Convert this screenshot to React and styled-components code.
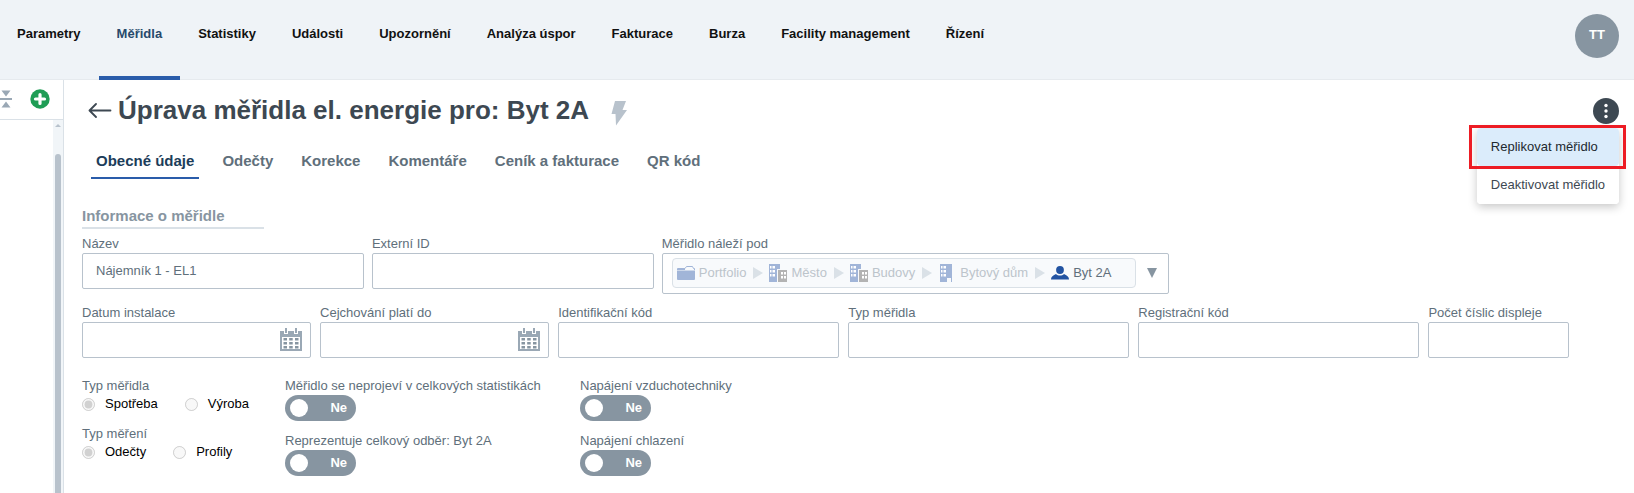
import React, { useState } from 'react';
import styled, { createGlobalStyle } from 'styled-components';

const GlobalStyle = createGlobalStyle`
	* {
		box-sizing: border-box;
	}

	body {
		margin: 0;
		background-color: #fff;
		color: #5f6f7e;
		font-family: 'Liberation Sans', Arial, sans-serif;
		font-size: 13px;
		line-height: 16px;
	}

	button,
	input {
		font: inherit;
	}
`;

const Page = styled.div`
	display: flex;
	flex-direction: column;
	min-height: 100vh;
`;

const Header = styled.header`
	display: flex;
	justify-content: space-between;
	height: 80px;
	padding-right: 15px;
	background-color: #eff3f7;
	border-bottom: 1px solid #e6eaee;
`;

const MainNav = styled.nav`
	display: flex;
	margin-bottom: -1px;
`;

const MainNavLink = styled.a`
	padding: 26px 18px 0;
	border-bottom: 4px solid ${({ $active }) => ($active ? '#2a5caa' : 'transparent')};
	color: ${({ $active }) => ($active ? '#27496b' : '#111')};
	font-weight: bold;
	text-decoration: none;
	white-space: nowrap;

	&:first-child {
		padding-left: 17px;
	}
`;

const Avatar = styled.button`
	width: 44px;
	height: 44px;
	margin-top: 14px;
	padding: 0 0 3px;
	border: 0;
	border-radius: 50%;
	background-color: #8795a1;
	color: #fff;
	font-weight: bold;
`;

const Body = styled.div`
	display: flex;
	flex: 1;
`;

const Sidebar = styled.aside`
	display: flex;
	flex-direction: column;
	flex: none;
	width: 64px;
	border-right: 1px solid #dae1e7;
`;

const SidebarTools = styled.div`
	display: flex;
	align-items: center;
	justify-content: space-between;
	height: 40px;
	padding: 0 13px 2px 0;
	border-bottom: 1px solid #dae1e7;
`;

const IconButton = styled.button`
	display: flex;
	padding: 0;
	border: 0;
	background: none;
`;

const ScrollTrack = styled.div`
	display: flex;
	flex-direction: column;
	align-items: center;
	flex: 1;
	align-self: flex-end;
	width: 10px;
	padding-top: 4px;
	background-color: #f1f5f8;
`;

const ScrollThumb = styled.div`
	flex: 1;
	width: 6px;
	margin-top: 27px;
	border-radius: 3px 3px 0 0;
	background-color: #b8c2cc;
`;

const Content = styled.main`
	flex: 1;
	min-width: 0;
	padding: 14px 15px 16px 18px;
`;

const TitleRow = styled.div`
	display: flex;
	align-items: center;
	height: 34px;
	padding-left: 6px;
`;

const Title = styled.h1`
	margin: 0 22px 2px 6px;
	color: #3d4852;
	font-size: 26px;
	line-height: 32px;
	white-space: nowrap;
`;

const Bolt = styled.svg`
	flex: none;
	margin-top: 4px;
`;

const MenuAnchor = styled.div`
	position: relative;
	margin-left: auto;
`;

const MoreButton = styled(IconButton)`
	align-items: center;
	justify-content: center;
	width: 26px;
	height: 26px;
	border-radius: 50%;
	background-color: #3d4852;
`;

const Menu = styled.div`
	position: absolute;
	top: 30px;
	right: 0;
	border-radius: 4px;
	background-color: #fff;
	box-shadow: 0 3px 10px rgba(0, 0, 0, 0.22);
`;

const MenuItem = styled.button`
	display: block;
	width: 100%;
	height: 38px;
	padding: 0 14px;
	border: 0;
	border-radius: 4px;
	background-color: ${({ $active }) => ($active ? '#dbecfb' : '#fff')};
	color: ${({ $active }) => ($active ? '#22292f' : '#3d4852')};
	text-align: left;
	white-space: nowrap;
`;

const MenuHighlight = styled.div`
	position: absolute;
	top: -3px;
	left: -8px;
	right: -7px;
	height: 44px;
	border: 3px solid #ed1c24;
	pointer-events: none;
`;

const Tabs = styled.nav`
	display: flex;
	gap: 18px;
	margin-top: 22px;
	padding-left: 9px;
`;

const Tab = styled.a`
	padding: 2px 5px 7px;
	border-bottom: 2px solid ${({ $active }) => ($active ? '#2a5caa' : 'transparent')};
	color: ${({ $active }) => ($active ? '#1c3d5a' : '#606f7b')};
	font-size: 15px;
	font-weight: bold;
	line-height: 18px;
	text-decoration: none;
	white-space: nowrap;
`;

const SectionTitle = styled.h2`
	width: 182px;
	margin: 28px 0 7px;
	padding-bottom: 2px;
	border-bottom: 2px solid #dae1e7;
	color: #8795a1;
	font-size: 15px;
	line-height: 18px;
`;

const FieldRow = styled.div`
	display: grid;
	grid-template-columns: ${({ $columns }) => $columns};
	column-gap: ${({ $gap }) => $gap};
	margin: 0 50px 11px 0;
	align-items: start;
`;

const Field = styled.div`
	min-width: 0;
`;

const Label = styled.label`
	display: block;
	height: 17px;
	color: #606f7b;
	white-space: nowrap;
`;

const InputBox = styled.div`
	display: flex;
	align-items: center;
	height: 36px;
	border: 1px solid #b8c2cc;
	border-radius: 2px;
	padding-right: 7px;
`;

const TextInput = styled.input`
	flex: 1;
	min-width: 0;
	height: 32px;
	padding: 0 0 2px 13px;
	border: 0;
	outline: 0;
	background: none;
	color: #606f7b;
`;

const TreeSelect = styled.button`
	display: flex;
	align-items: center;
	width: 100%;
	height: 41px;
	padding: 0 11px 1px 9px;
	border: 1px solid #b8c2cc;
	border-radius: 2px;
	background-color: #fff;
`;

const Path = styled.span`
	display: flex;
	align-items: center;
	flex: 1;
	height: 30px;
	margin-right: 11px;
	padding-left: 4px;
	border: 1px solid #dae1e7;
	border-radius: 4px;
	background-color: #f8fafc;
`;

const PathItem = styled.span`
	display: flex;
	align-items: center;
	gap: 4px;
	color: ${({ $current }) => ($current ? '#606f7b' : '#bcc4cb')};
	white-space: nowrap;
`;

const PathArrow = styled.svg`
	flex: none;
	margin: 0 6px 0 7px;
`;

const Options = styled.div`
	display: flex;
	padding-top: 9px;
`;

const OptionColumn = styled.div`
	width: ${({ $width }) => $width};
`;

const RadioGroup = styled.fieldset`
	min-width: 0;
	height: 48px;
	margin: 0;
	padding: 0;
	border: 0;
`;

const Legend = styled.legend`
	padding: 0;
	color: #606f7b;
`;

const RadioRow = styled.div`
	display: flex;
	gap: 27px;
	padding-top: 2px;
`;

const RadioLabel = styled.label`
	display: flex;
	align-items: center;
	gap: 10px;
	color: #000;
`;

const Radio = styled.input`
	width: 13px;
	height: 13px;
	margin: 0;
`;

const SwitchField = styled.div`
	height: 55px;
`;

const Switch = styled.input`
	appearance: none;
	display: flex;
	align-items: center;
	justify-content: space-between;
	width: 71px;
	height: 26px;
	margin: 0;
	padding: 0 9px 0 5px;
	border-radius: 13px;
	background-color: #8795a1;
	color: #fff;
	font-weight: bold;

	&::before {
		content: '';
		width: 18px;
		height: 18px;
		border-radius: 50%;
		background-color: #fff;
	}

	&::after {
		content: 'Ne';
	}

	&:checked {
		flex-direction: row-reverse;
		padding: 0 5px 0 9px;
		background-color: #2a5caa;
	}

	&:checked::after {
		content: 'Ano';
	}
`;

const CollapseIcon = () => (
	<svg width='12' height='18' viewBox='0 0 12 18' fill='#9aa8b5'>
		<path d='M1.500 0.500h9L6 6.500zM0 8h12v2H0zM6 11.500l4.500 6h-9z' />
	</svg>
);

const AddIcon = () => (
	<svg width='20' height='20' viewBox='0 0 20 20'>
		<circle cx='10' cy='10' r='9.7' fill='#1f9d55' />
		<path d='M10 5.500v9M5.500 10h9' stroke='#fff' strokeWidth='3.200' strokeLinecap='round' />
	</svg>
);

const BackIcon = () => (
	<svg width='24' height='16' viewBox='0 0 24 16' fill='none' stroke='#3d4852' strokeWidth='1.800'>
		<path d='M22.500 7.500H2M8 1L1.500 7.500L8 14' strokeLinecap='round' strokeLinejoin='round' />
	</svg>
);

const BoltIcon = () => (
	<Bolt width='16' height='26' viewBox='0 0 16 26' fill='#b8c2cc'>
		<path d='M4 1h11l-3.500 9H16L5 25.500L4.500 14H0.500z' />
	</Bolt>
);

const DotsIcon = () => (
	<svg width='4' height='16' viewBox='0 0 4 16' fill='#fff'>
		<circle cx='2' cy='2.500' r='1.700' />
		<circle cx='2' cy='8' r='1.700' />
		<circle cx='2' cy='13.500' r='1.700' />
	</svg>
);

const CalendarIcon = () => (
	<svg width='24' height='24' viewBox='0 0 24 24'>
		<path d='M1 3h22v20H1z' fill='#9aa8b5' />
		<path d='M3 9h18v12H3z' fill='#fff' />
		<path d='M5 0h4v6H5zM15 0h4v6h-4z' fill='#fff' />
		<path d='M6 0h2v5H6zM16 0h2v5h-2z' fill='#9aa8b5' />
		<path
			d='M4.500 10h3.500v2.500H4.500zM10.200 10h3.500v2.500h-3.500zM16 10h3.500v2.500H16zM4.500 14h3.500v2.500H4.500zM10.200 14h3.500v2.500h-3.500zM16 14h3.500v2.500H16zM4.500 18h3.500v2.500H4.500zM10.200 18h3.500v2.500h-3.500zM16 18h3.500v2.500H16z'
			fill='#8795a1'
		/>
	</svg>
);

const FolderIcon = () => (
	<svg width='18' height='16' viewBox='0 0 18 16'>
		<path d='M0 5.500h18V14a1 1 0 0 1-1 1H1a1 1 0 0 1-1-1z' fill='#a1b5d8' />
		<path d='M0.500 5V3.500h7.500l1.500-2h6l1 2h1V5' fill='none' stroke='#a1b5d8' />
		<path d='M1 4h7v1H1z' fill='#a1b5d8' />
	</svg>
);

const BuildingsIcon = () => (
	<svg width='18' height='18' viewBox='0 0 18 18'>
		<path d='M0 0h11v18H0z' fill='#a1b5d8' />
		<path d='M1 2h1.500v2.500H1zM3.500 2H6v2.500H3.500zM1 6h1.500v2.500H1zM3.500 6H6v2.500H3.500zM1 10h1.500v2.500H1zM3.500 10H6v2.500H3.500z' fill='#fff' />
		<path d='M8 5h10v13H8z' fill='#f8fafc' />
		<path d='M9 6h9v12H9z' fill='#b3b3b3' />
		<path d='M12 8h2v2.500h-2zM15 8h2v2.500h-2zM12 12h2v2.500h-2zM15 12h2v2.500h-2z' fill='#fff' />
	</svg>
);

const BuildingIcon = () => (
	<svg width='18' height='18' viewBox='0 0 18 18'>
		<path d='M2 0h12v18h-1v-4H9v4H2z' fill='#a1b5d8' />
		<path d='M3 2h1.500v2.500H3zM5.500 2H8v2.500H5.500zM3 6h1.500v2.500H3zM5.500 6H8v2.500H5.500zM3 10h1.500v2.500H3zM5.500 10H8v2.500H5.500z' fill='#fff' />
	</svg>
);

const PersonIcon = () => (
	<svg width='18' height='14' viewBox='0 0 18 14' fill='#2253a2'>
		<circle cx='9' cy='4' r='3.900' />
		<path d='M0 13.500c0-2.500 1.500-3.800 5-5.500 2 2 6 2 8 0 3.500 1.700 5 3 5 5.500z' />
	</svg>
);

const Arrow = () => (
	<PathArrow width='10' height='12' viewBox='0 0 10 12' fill='#dae1e7'>
		<path d='M0 0l10 6-10 6z' />
	</PathArrow>
);

const navItems = [
	'Parametry',
	'Měřidla',
	'Statistiky',
	'Události',
	'Upozornění',
	'Analýza úspor',
	'Fakturace',
	'Burza',
	'Facility management',
	'Řízení',
];

const tabs = ['Obecné údaje', 'Odečty', 'Korekce', 'Komentáře', 'Ceník a fakturace', 'QR kód'];

const path = [
	{ name: 'Portfolio', Icon: FolderIcon },
	{ name: 'Město', Icon: BuildingsIcon },
	{ name: 'Budovy', Icon: BuildingsIcon },
	{ name: 'Bytový dům', Icon: BuildingIcon },
	{ name: 'Byt 2A', Icon: PersonIcon },
];

const TextField = ({ id, label, value = '', date }) => {
	const [text, setText] = useState(value);

	return (
		<Field>
			<Label htmlFor={id}>{label}</Label>
			<InputBox>
				<TextInput id={id} type='text' value={text} onChange={(e) => setText(e.target.value)} />
				{date && (
					<IconButton type='button' aria-label='Vybrat datum'>
						<CalendarIcon />
					</IconButton>
				)}
			</InputBox>
		</Field>
	);
};

const RadioField = ({ name, legend, options }) => (
	<RadioGroup>
		<Legend>{legend}</Legend>
		<RadioRow>
			{options.map((option, i) => (
				<RadioLabel key={option}>
					<Radio type='radio' name={name} defaultChecked={i === 0} disabled />
					{option}
				</RadioLabel>
			))}
		</RadioRow>
	</RadioGroup>
);

const Toggle = ({ id, label }) => (
	<SwitchField>
		<Label htmlFor={id}>{label}</Label>
		<Switch id={id} type='checkbox' role='switch' />
	</SwitchField>
);

const App = () => {
	const [menuOpen, setMenuOpen] = useState(true);

	return (
		<Page>
			<GlobalStyle />
			<Header>
				<MainNav>
					{navItems.map((item) => (
						<MainNavLink key={item} href='#' $active={item === 'Měřidla'}>
							{item}
						</MainNavLink>
					))}
				</MainNav>
				<Avatar type='button'>TT</Avatar>
			</Header>
			<Body>
				<Sidebar>
					<SidebarTools>
						<IconButton type='button' aria-label='Sbalit'>
							<CollapseIcon />
						</IconButton>
						<IconButton type='button' aria-label='Přidat'>
							<AddIcon />
						</IconButton>
					</SidebarTools>
					<ScrollTrack>
						<svg width='6' height='3' viewBox='0 0 6 3' fill='#b8c2cc'>
							<path d='M3 0l3 3H0z' />
						</svg>
						<ScrollThumb />
					</ScrollTrack>
				</Sidebar>
				<Content>
					<TitleRow>
						<IconButton type='button' aria-label='Zpět'>
							<BackIcon />
						</IconButton>
						<Title>Úprava měřidla el. energie pro: Byt 2A</Title>
						<BoltIcon />
						<MenuAnchor>
							<MoreButton type='button' aria-label='Další akce' onClick={() => setMenuOpen(!menuOpen)}>
								<DotsIcon />
							</MoreButton>
							{menuOpen && (
								<Menu>
									<MenuItem type='button' $active>
										Replikovat měřidlo
									</MenuItem>
									<MenuItem type='button'>Deaktivovat měřidlo</MenuItem>
									<MenuHighlight />
								</Menu>
							)}
						</MenuAnchor>
					</TitleRow>
					<Tabs>
						{tabs.map((tab, i) => (
							<Tab key={tab} href='#' $active={i === 0}>
								{tab}
							</Tab>
						))}
					</Tabs>
					<SectionTitle>Informace o měřidle</SectionTitle>
					<FieldRow $columns='100fr 100fr 180fr 139fr' $gap='8px'>
						<TextField id='name' label='Název' value='Nájemník 1 - EL1' />
						<TextField id='external-id' label='Externí ID' />
						<Field>
							<Label htmlFor='parent'>Měřidlo náleží pod</Label>
							<TreeSelect id='parent' type='button'>
								<Path>
									{path.map(({ name, Icon }, i) => (
										<React.Fragment key={name}>
											{i > 0 && <Arrow />}
											<PathItem $current={i === path.length - 1}>
												<Icon />
												{name}
											</PathItem>
										</React.Fragment>
									))}
								</Path>
								<svg width='10' height='10' viewBox='0 0 10 10' fill='#8795a1'>
									<path d='M0 0h10L5 10z' />
								</svg>
							</TreeSelect>
						</Field>
					</FieldRow>
					<FieldRow $columns='163fr 163fr 200fr 200fr 200fr 100fr' $gap='9px'>
						<TextField id='installed' label='Datum instalace' date />
						<TextField id='calibrated' label='Cejchování platí do' date />
						<TextField id='ident' label='Identifikační kód' />
						<TextField id='type' label='Typ měřidla' />
						<TextField id='registration' label='Registrační kód' />
						<TextField id='digits' label='Počet číslic displeje' />
					</FieldRow>
					<Options>
						<OptionColumn $width='203px'>
							<RadioField name='meter' legend='Typ měřidla' options={['Spotřeba', 'Výroba']} />
							<RadioField name='measure' legend='Typ měření' options={['Odečty', 'Profily']} />
						</OptionColumn>
						<OptionColumn $width='295px'>
							<Toggle id='hidden' label='Měřidlo se neprojeví v celkových statistikách' />
							<Toggle id='total' label='Reprezentuje celkový odběr: Byt 2A' />
						</OptionColumn>
						<OptionColumn $width='295px'>
							<Toggle id='air' label='Napájení vzduchotechniky' />
							<Toggle id='cooling' label='Napájení chlazení' />
						</OptionColumn>
					</Options>
				</Content>
			</Body>
		</Page>
	);
};

export default App;
